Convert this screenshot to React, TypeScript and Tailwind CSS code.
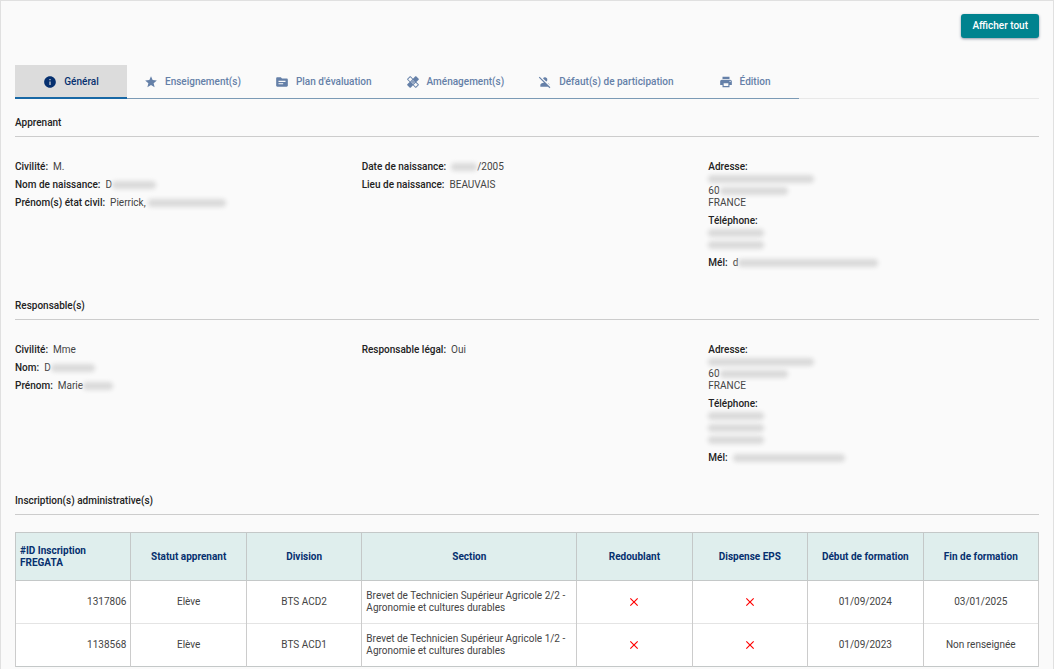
import type { ReactNode } from 'react'
import clsx from 'clsx'
import { MdClose, MdHealing, MdInfo, MdPersonOff, MdPrint, MdStar, MdTopic } from 'react-icons/md'

const tabs = [
    { label: 'Général', icon: MdInfo, active: true },
    { label: 'Enseignement(s)', icon: MdStar },
    { label: "Plan d'évaluation", icon: MdTopic },
    { label: 'Aménagement(s)', icon: MdHealing },
    { label: 'Défaut(s) de participation', icon: MdPersonOff },
    { label: 'Édition', icon: MdPrint },
]

const inscriptions = [
    {
        id: '1317806',
        statut: 'Elève',
        division: 'BTS ACD2',
        section: 'Brevet de Technicien Supérieur Agricole 2/2 - Agronomie et cultures durables',
        debut: '01/09/2024',
        fin: '03/01/2025',
    },
    {
        id: '1138568',
        statut: 'Elève',
        division: 'BTS ACD1',
        section: 'Brevet de Technicien Supérieur Agricole 1/2 - Agronomie et cultures durables',
        debut: '01/09/2023',
        fin: 'Non renseignée',
    },
]

// Personal data stays hidden behind a blurred strip
const Masked = ({ className }: { className: string }) => (
    <span aria-hidden="true" className={clsx('inline-block h-2 rounded-sm bg-[#dadada] align-middle blur-[2px]', className)} />
)

const Field = ({ label, children }: { label: string, children: ReactNode }) => (
    <div className="flex gap-[5px]">
        <dt className="font-medium text-[#222]">{label}:</dt>
        <dd>{children}</dd>
    </div>
)

const BlockField = ({ label, children }: { label: string, children: ReactNode }) => (
    <div>
        <dt className="font-medium text-[#222]">{label}:</dt>
        <dd>{children}</dd>
    </div>
)

const Section = ({ title, children }: { title: string, children: ReactNode }) => (
    <section>
        <h2 className="border-b border-[#ccc] pb-[7px] font-medium leading-3 text-[#222]">{title}</h2>
        {children}
    </section>
)

const Adresse = () => (
    <BlockField label="Adresse">
        <div><Masked className="w-[106px]" /></div>
        <div>60<Masked className="w-[68px]" /></div>
        <div>FRANCE</div>
    </BlockField>
)

const Croix = () => <MdClose role="img" aria-label="Non" className="mx-auto size-3.5 text-[#f00]" />

export default function App() {
    return (
        <main className="min-h-screen border-x border-t border-[#e0e0e0] bg-[#fafafa] px-3.5 pt-[13px] font-[Roboto,sans-serif] text-[10px] leading-3 text-[#444]">
            <div className="flex justify-end">
                <button type="button" className="h-6 rounded-[3px] bg-[#00838f] px-[11px] font-medium text-white shadow-sm shadow-gray-400">
                    Afficher tout
                </button>
            </div>

            <div className="mt-[27px] border-b border-[#e8e8e8]">
                <div role="tablist" className="-mb-px flex w-fit border-b border-[#7b9ab5]">
                    {tabs.map(({ label, icon: Icon, active }) => (
                        <button
                            key={label}
                            type="button"
                            role="tab"
                            aria-selected={!!active}
                            className={clsx(
                                'flex h-[33px] items-center justify-center gap-[7px] px-[17px] font-medium',
                                active
                                    ? 'min-w-28 bg-[#dcdcdc] text-[#06306f] shadow-[inset_0_-1px_#1868a5,0_1px_#1868a5]'
                                    : 'min-w-27 text-[#6580a8]'
                            )}
                        >
                            <Icon className="size-3.5" />
                            {label}
                        </button>
                    ))}
                </div>
            </div>

            <div className="mt-[18px]">
                <Section title="Apprenant">
                    <div className="grid grid-cols-3 gap-4 pt-6 pb-[31px]">
                        <dl className="space-y-1.5">
                            <Field label="Civilité">M.</Field>
                            <Field label="Nom de naissance">D<Masked className="w-11" /></Field>
                            <Field label="Prénom(s) état civil">Pierrick, <Masked className="w-[78px]" /></Field>
                        </dl>
                        <dl className="space-y-1.5">
                            <Field label="Date de naissance"><Masked className="w-[26px]" />/2005</Field>
                            <Field label="Lieu de naissance">BEAUVAIS</Field>
                        </dl>
                        <dl className="space-y-1.5">
                            <Adresse />
                            <BlockField label="Téléphone">
                                <div><Masked className="w-14" /></div>
                                <div><Masked className="w-14" /></div>
                            </BlockField>
                            <Field label="Mél">d<Masked className="w-[140px]" /></Field>
                        </dl>
                    </div>
                </Section>

                <Section title="Responsable(s)">
                    <div className="grid grid-cols-3 gap-4 pt-6 pb-[31px]">
                        <dl className="space-y-1.5">
                            <Field label="Civilité">Mme</Field>
                            <Field label="Nom">D<Masked className="w-11" /></Field>
                            <Field label="Prénom">Marie<Masked className="w-[30px]" /></Field>
                        </dl>
                        <dl>
                            <Field label="Responsable légal">Oui</Field>
                        </dl>
                        <dl className="space-y-1.5">
                            <Adresse />
                            <BlockField label="Téléphone">
                                <div><Masked className="w-14" /></div>
                                <div><Masked className="w-14" /></div>
                                <div><Masked className="w-14" /></div>
                            </BlockField>
                            <Field label="Mél"><Masked className="w-28" /></Field>
                        </dl>
                    </div>
                </Section>

                <Section title="Inscription(s) administrative(s)">
                    <table className="mt-[17px] w-full table-fixed border-collapse border border-[#c4c8c8] bg-white text-center">
                        <colgroup>
                            <col />
                            <col />
                            <col />
                            <col className="w-[21%]" />
                            <col />
                            <col />
                            <col />
                            <col />
                        </colgroup>
                        <thead className="bg-[#dfeeed] text-[#06306f]">
                            <tr className="h-12 *:border *:border-[#c4c8c8] *:px-1 *:font-bold">
                                <th className="text-left">#ID Inscription FREGATA</th>
                                <th>Statut apprenant</th>
                                <th>Division</th>
                                <th>Section</th>
                                <th>Redoublant</th>
                                <th>Dispense EPS</th>
                                <th>Début de formation</th>
                                <th>Fin de formation</th>
                            </tr>
                        </thead>
                        <tbody>
                            {inscriptions.map((row) => (
                                <tr key={row.id} className="h-[43px] border-b border-[#e4e4e4] *:border-x *:border-[#ccc] *:px-1 last:border-[#c4c8c8]">
                                    <td className="text-right">{row.id}</td>
                                    <td>{row.statut}</td>
                                    <td>{row.division}</td>
                                    <td className="text-left">{row.section}</td>
                                    <td><Croix /></td>
                                    <td><Croix /></td>
                                    <td>{row.debut}</td>
                                    <td>{row.fin}</td>
                                </tr>
                            ))}
                        </tbody>
                    </table>
                </Section>
            </div>
        </main>
    )
}
